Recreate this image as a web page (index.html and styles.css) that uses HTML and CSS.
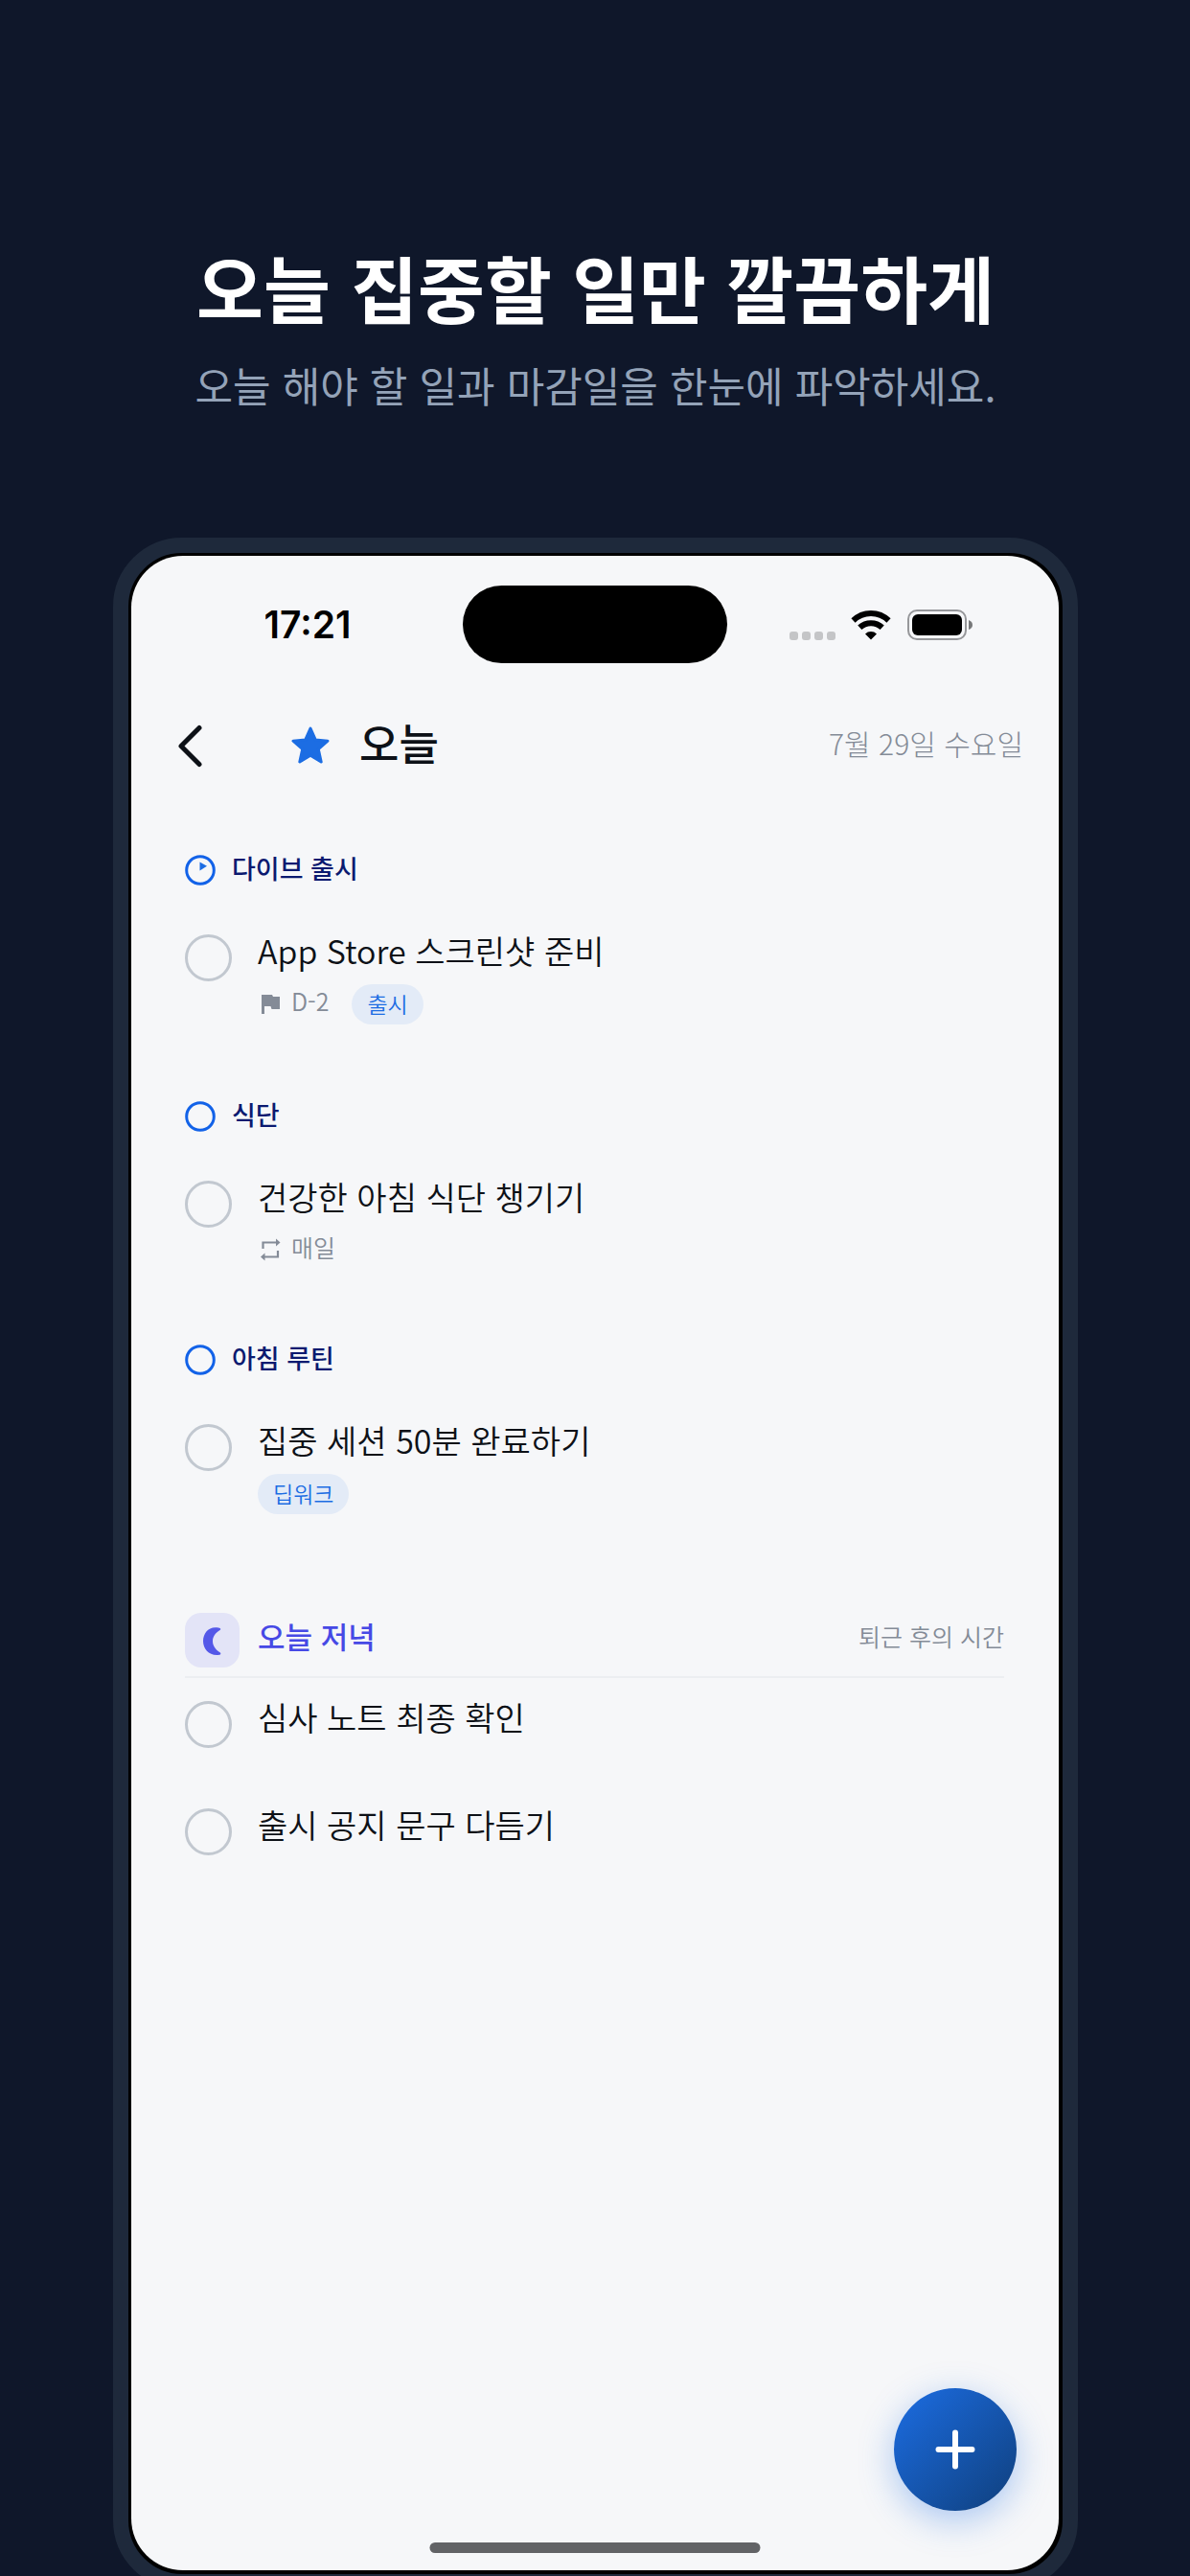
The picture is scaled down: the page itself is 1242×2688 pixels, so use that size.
FILE: index.html
```html
<!DOCTYPE html>
<html lang="ko">
<head>
    <meta charset="UTF-8">
    <meta name="viewport" content="width=device-width, initial-scale=1.0">
    <title>오늘 집중할 일만 깔끔하게</title>
    <link rel="stylesheet" href="styles.css">
</head>
<body>
    <header class="intro">
        <h1>오늘 집중할 일만 깔끔하게</h1>
        <p>오늘 해야 할 일과 마감일을 한눈에 파악하세요.</p>
    </header>

    <div class="phone">
        <div class="screen">
            <!-- Status bar -->
            <div class="status-bar">
                <span class="time">17:21</span>
                <span class="island"></span>
                <div class="status-icons">
                    <svg class="signal" width="50" height="32" viewBox="0 0 50 32" fill="#c4c5c7">
                        <rect x="1" y="23" width="9" height="9" rx="3"/>
                        <rect x="14" y="23" width="9" height="9" rx="3"/>
                        <rect x="27" y="23" width="9" height="9" rx="3"/>
                        <rect x="40" y="23" width="9" height="9" rx="3"/>
                    </svg>
                    <svg class="wifi" width="42" height="32" viewBox="0 0 42 32">
                        <path d="M2.500 11.500a26.500 26.500 0 0 1 37 0M9.300 18.800a17 17 0 0 1 23.400 0" fill="none" stroke="#000" stroke-width="6"/>
                        <path d="M21 31.500l-6-6a8.500 8.500 0 0 1 12 0z"/>
                    </svg>
                    <svg class="battery" width="70" height="32" viewBox="0 0 70 32">
                        <rect x="1" y="1" width="60" height="30" rx="9" fill="none" stroke="#96979a" stroke-width="2"/>
                        <rect x="5" y="5" width="52" height="22" rx="6"/>
                        <path d="M64 11q4 1.500 4 5t-4 5z" fill="#77787a"/>
                    </svg>
                </div>
            </div>

            <!-- Title bar -->
            <div class="nav-bar">
                <button class="back" type="button" aria-label="뒤로">
                    <svg width="30" height="48" viewBox="0 0 30 48" fill="none" stroke="#0d1117" stroke-width="5" stroke-linecap="round" stroke-linejoin="round">
                        <path d="M25 5.500L6 24.500l19 19"/>
                    </svg>
                </button>
                <svg class="star" width="42" height="42" viewBox="0 0 42 42">
                    <path d="M21 3l5.200 11.900 12.800 1.300-9.700 8.500 2.900 13.300L21 31.200 9.800 38l2.900-13.300L3 16.200l12.800-1.300z" fill="#1c6de3" stroke="#1c6de3" stroke-width="3" stroke-linejoin="round"/>
                </svg>
                <h2>오늘</h2>
                <time>7월 29일 수요일</time>
            </div>

            <main class="content">
                <section class="project">
                    <h3>
                        <svg width="32" height="32" viewBox="0 0 32 32">
                            <circle cx="16" cy="16" r="14.300" fill="none" stroke="#1262e8" stroke-width="3"/>
                            <path d="M15.500 7.500l7.500 4.200-7.500 4.800z" fill="#1c6de3"/>
                        </svg>
                        다이브 출시
                    </h3>
                    <div class="task">
                        <input type="checkbox" id="task-1">
                        <div class="task-body">
                            <label for="task-1">App Store 스크린샷 준비</label>
                            <div class="meta">
                                <svg width="24" height="36" viewBox="0 0 24 36" fill="#848b97">
                                    <path d="M4 11h11l1 2h7v13h-8.500l-1-3H7v8H4z"/>
                                </svg>
                                <span>D-2</span>
                                <span class="chip">출시</span>
                            </div>
                        </div>
                    </div>
                </section>

                <section class="project">
                    <h3>
                        <svg width="32" height="32" viewBox="0 0 32 32">
                            <circle cx="16" cy="16" r="14.300" fill="none" stroke="#1262e8" stroke-width="3"/>
                        </svg>
                        식단
                    </h3>
                    <div class="task">
                        <input type="checkbox" id="task-2">
                        <div class="task-body">
                            <label for="task-2">건강한 아침 식단 챙기기</label>
                            <div class="meta">
                                <svg width="24" height="36" viewBox="0 0 24 36">
                                    <path d="M5.500 19v-6.500H20M21 21v6.500H6.500" fill="none" stroke="#848b97" stroke-width="2.200"/>
                                    <path d="M19 8.500l4.500 4-4.500 4zM7.500 23.500L3 27.500l4.500 4z" fill="#848b97"/>
                                </svg>
                                <span>매일</span>
                            </div>
                        </div>
                    </div>
                </section>

                <section class="project">
                    <h3>
                        <svg width="32" height="32" viewBox="0 0 32 32">
                            <circle cx="16" cy="16" r="14.300" fill="none" stroke="#1262e8" stroke-width="3"/>
                        </svg>
                        아침 루틴
                    </h3>
                    <div class="task">
                        <input type="checkbox" id="task-3">
                        <div class="task-body">
                            <label for="task-3">집중 세션 50분 완료하기</label>
                            <div class="meta">
                                <span class="chip">딥워크</span>
                            </div>
                        </div>
                    </div>
                </section>

                <section class="evening">
                    <div class="evening-head">
                        <span class="moon">
                            <svg width="32" height="32" viewBox="0 0 32 32">
                                <path d="M22 2.500C12 .5 6 8 6 16.500S13 32.500 23 30.800C24.500 30.500 24.800 29 23.500 28.200 18.500 25 16 21 16 16.500s2.500-8.500 7.500-11.500C25 4 24 2.800 22 2.500z" fill="#5458e8"/>
                            </svg>
                        </span>
                        <h3>오늘 저녁</h3>
                        <p>퇴근 후의 시간</p>
                    </div>
                    <div class="task">
                        <input type="checkbox" id="task-4">
                        <div class="task-body"><label for="task-4">심사 노트 최종 확인</label></div>
                    </div>
                    <div class="task">
                        <input type="checkbox" id="task-5">
                        <div class="task-body"><label for="task-5">출시 공지 문구 다듬기</label></div>
                    </div>
                </section>
            </main>

            <button class="fab" type="button" aria-label="할 일 추가">
                <svg width="48" height="48" viewBox="0 0 48 48" stroke="#fff" stroke-width="6" stroke-linecap="round">
                    <path d="M24 6.500v35M6.500 24h35"/>
                </svg>
            </button>
            <div class="home-indicator"></div>
        </div>
    </div>
</body>
</html>
```
FILE: styles.css
```css
* {
    margin: 0;
    padding: 0;
    box-sizing: border-box;
}

html {
    background-color: #0f172a;
}

body {
    display: flex;
    flex-direction: column;
    height: 100vh;
    min-height: 2100px;
    padding: 0 117px 0 118px;
    overflow: hidden;
    background-color: #0f172a;
    font-family: "Noto Sans CJK KR", sans-serif;
    color: #0d1117;
}

svg {
    display: block;
    flex-shrink: 0;
}

/* Headline */
.intro {
    padding: 243px 0 120px;
    text-align: center;
}

.intro h1 {
    font-size: 76px;
    line-height: 112px;
    font-weight: 700;
    color: #fff;
}

.intro p {
    margin-top: 6px;
    font-size: 43px;
    line-height: 80px;
    color: #94a3b8;
}

/* Phone frame */
.phone {
    flex: 1;
    display: flex;
    margin-bottom: -14px;
    padding: 3px 4px 4px 3px;
    border: 16px solid #1e293b;
    border-radius: 72px;
    background-color: #000;
}

.screen {
    flex: 1;
    position: relative;
    border-radius: 54px;
    background-color: #f6f7f9;
    overflow: hidden;
}

/* Status bar */
.status-bar {
    display: grid;
    grid-template-columns: 1fr 276px 1fr;
    align-items: center;
    padding-top: 31px;
}

.time {
    padding-left: 22px;
    font-family: Inter, sans-serif;
    font-size: 39px;
    line-height: 48px;
    font-weight: 600;
    color: #000;
    text-align: center;
}

.island {
    height: 81px;
    border-radius: 41px;
    background-color: #000;
}

.status-icons {
    display: flex;
    align-items: center;
    padding-left: 64px;
}

.wifi {
    margin-left: 15px;
}

.battery {
    margin-left: 17px;
}

/* Title bar */
.nav-bar {
    display: flex;
    align-items: center;
    padding: 52px 37px 0 46px;
    height: 120px;
}

.nav-bar h2 {
    margin-left: 30px;
    padding-bottom: 6px;
    font-size: 45px;
    line-height: 62px;
    font-weight: 500;
}

.nav-bar time {
    margin-left: auto;
    padding-bottom: 6px;
    font-size: 30px;
    line-height: 48px;
    font-weight: 300;
    color: #848b97;
}

.back {
    border: none;
    background: none;
    cursor: pointer;
}

.star {
    margin-left: 90px;
}

/* Task list */
.content {
    padding: 80px 57px 0 56px;
}

.project {
    margin-bottom: 80px;
}

.project h3 {
    display: flex;
    align-items: flex-start;
    gap: 17px;
    height: 32px;
    margin-bottom: 46px;
    font-size: 27px;
    line-height: 28px;
    font-weight: 500;
    color: #0b1a70;
}

.task {
    display: flex;
    gap: 27px;
}

.task input {
    appearance: none;
    flex-shrink: 0;
    width: 49px;
    height: 49px;
    margin-top: 5px;
    border: 3px solid #c2c8d0;
    border-radius: 50%;
    cursor: pointer;
}

.task label {
    display: block;
    font-size: 34px;
    line-height: 44px;
    font-weight: 350;
}

.meta {
    display: flex;
    align-items: flex-start;
    min-height: 39px;
    margin-top: 13px;
    font-size: 25px;
    line-height: 34px;
    font-weight: 350;
    color: #848b97;
}

.meta svg + span {
    margin: 0 24px 0 11px;
}

.chip {
    padding: 0 16px 2px;
    border-radius: 21px;
    background-color: #e3ebf7;
    font-size: 23px;
    line-height: 40px;
    font-weight: 350;
    color: #1c6de3;
}

/* Evening group */
.evening {
    padding-top: 23px;
}

.evening-head {
    display: flex;
    align-items: flex-start;
    margin-bottom: 19px;
    padding-bottom: 9px;
    border-bottom: 2px solid #eceef1;
}

.moon {
    display: flex;
    align-items: center;
    justify-content: center;
    width: 57px;
    height: 57px;
    border-radius: 17px;
    background-color: #e3e4f7;
}

.evening-head h3 {
    margin-left: 19px;
    font-size: 31px;
    line-height: 48px;
    font-weight: 500;
    color: #4649e5;
}

.evening-head p {
    margin-left: auto;
    font-size: 25px;
    line-height: 48px;
    font-weight: 350;
    color: #848b97;
}

.evening .task {
    min-height: 112px;
}

/* Floating button and home indicator lie over the list */
.fab {
    position: absolute;
    right: 44px;
    bottom: 62px;
    display: flex;
    align-items: center;
    justify-content: center;
    width: 128px;
    height: 128px;
    border: none;
    border-radius: 50%;
    background: linear-gradient(135deg, #1c6de3, #0f3f7c);
    box-shadow: 0 10px 36px rgba(28, 109, 227, 0.35);
    cursor: pointer;
}

.home-indicator {
    position: absolute;
    left: 50%;
    bottom: 18px;
    width: 345px;
    height: 11px;
    border-radius: 6px;
    background-color: #626366;
    transform: translateX(-50%);
}
```
